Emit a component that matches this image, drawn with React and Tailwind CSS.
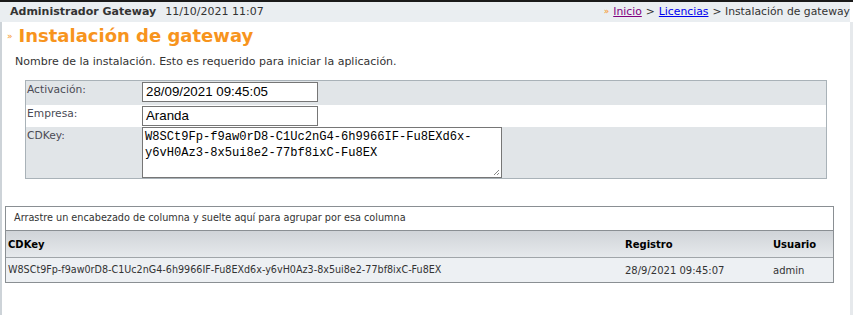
export default function App() {
  const sans = { fontFamily: '"DejaVu Sans", Verdana, sans-serif' }
  return (
    <div className="relative h-[315px] w-[853px] overflow-hidden bg-white text-[#333]" style={sans}>
      <div className="h-[2px] bg-[#1a1a1a]" />
      <div className="flex h-[315px]">
        <div className="flex min-w-0 flex-1 flex-col">
          <div className="flex h-[20px] items-center justify-between overflow-hidden bg-[#eaeef1] pl-[10px] text-[11px]">
            <div className="flex items-center gap-[9px] whitespace-nowrap">
              <span className="font-bold">Administrador Gateway</span>
              <span className="text-[11px]">11/10/2021 11:07</span>
            </div>
            <div className="flex shrink-0 items-center gap-[4px] whitespace-nowrap text-[10.8px]">
              <span className="text-[9px] text-[#f7941d]">»</span>
              <a className="text-[#800080] underline">Inicio</a>
              <span>&gt;</span>
              <a className="text-[#0000ee] underline">Licencias</a>
              <span>&gt; Instalación de gateway</span>
            </div>
          </div>
          <div className="flex flex-1 flex-col border-l-[2px] border-[#cdd3d8]">
            <h1 className="mt-[2px] flex items-center gap-[6px] pl-[5px] text-[18px] font-bold leading-[24px] text-[#f7941d]">
              <span className="text-[9px] font-normal">»</span>
              <span>Instalación de gateway</span>
            </h1>
            <p className="mt-[6px] pl-[13px] text-[11px] leading-[15px]">
              Nombre de la instalación. Esto es requerido para iniciar la aplicación.
            </p>
            <div className="ml-[23px] mt-[11px] w-[802px] border border-[#a9b2b8] text-[10.7px] text-[#4b4b55]">
              <div className="flex h-[24px] bg-[#e1e5e8]">
                <div className="w-[116px] pl-[1px] pt-[1px]">Activación:</div>
                <div className="mt-[1px] flex h-[20px] w-[176px] items-center border border-[#767676] bg-white px-[3px] text-[13.3px] text-black" style={{ fontFamily: '"Liberation Sans", Arial, sans-serif' }}>
                  28/09/2021 09:45:05
                </div>
              </div>
              <div className="flex h-[22px] bg-white">
                <div className="w-[116px] pl-[1px] pt-[1px]">Empresa:</div>
                <div className="mt-[1px] flex h-[20px] w-[176px] items-center border border-[#767676] bg-white px-[3px] text-[13.3px] text-black" style={{ fontFamily: '"Liberation Sans", Arial, sans-serif' }}>
                  Aranda
                </div>
              </div>
              <div className="flex h-[51px] bg-[#e1e5e8]">
                <div className="w-[116px] pl-[1px] pt-[1px]">CDKey:</div>
                <div className="relative h-[51px] w-[360px] border border-[#767676] bg-white px-[2px] pt-[1px] text-[12.1px] leading-[16px] text-black" style={{ fontFamily: '"Liberation Mono", "DejaVu Sans Mono", monospace' }}>
                  W8SCt9Fp-f9aw0rD8-C1Uc2nG4-6h9966IF-Fu8EXd6x-
                  <br />
                  y6vH0Az3-8x5ui8e2-77bf8ixC-Fu8EX
                  <svg className="absolute bottom-[1px] right-[1px]" width="8" height="8" viewBox="0 0 8 8">
                    <path d="M7 2 L2 7 M7 5 L5 7" stroke="#888" strokeWidth="1" />
                  </svg>
                </div>
              </div>
            </div>
            <div className="ml-[3px] mt-[27px] w-[829px] border border-[#8a8f93]">
              <div className="flex h-[24px] items-center border-b border-[#8a8f93] bg-white pl-[8px] text-[9.7px] text-[#333]">
                Arrastre un encabezado de columna y suelte aquí para agrupar por esa columna
              </div>
              <div className="flex h-[27px] items-center border-b border-[#a0a5a9] bg-gradient-to-b from-[#d0d4d8] to-[#e6e9ec] text-[10px] font-bold text-black">
                <div className="flex-1 pl-[2px]">CDKey</div>
                <div className="w-[148px]">Registro</div>
                <div className="w-[60px]">Usuario</div>
              </div>
              <div className="flex h-[24px] items-center bg-[#edf0f3] text-[9.6px] text-[#333]">
                <div className="flex-1 pl-[2px]">W8SCt9Fp-f9aw0rD8-C1Uc2nG4-6h9966IF-Fu8EXd6x-y6vH0Az3-8x5ui8e2-77bf8ixC-Fu8EX</div>
                <div className="w-[148px] text-[10px]">28/9/2021 09:45:07</div>
                <div className="w-[60px] text-[10px]">admin</div>
              </div>
            </div>
          </div>
        </div>
        <div className="mt-[20px] w-[3px] bg-[#e6e9ec]" />
      </div>
    </div>
  )
}
